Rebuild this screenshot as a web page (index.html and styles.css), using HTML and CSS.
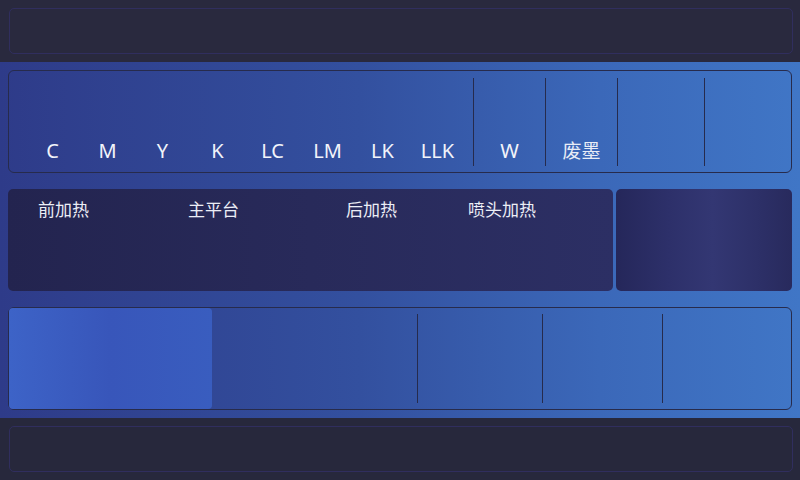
FILE: index.html
```html
<!DOCTYPE html>
<html lang="zh">
<head>
<meta charset="utf-8">
<title>Printer panel</title>
<link rel="stylesheet" href="styles.css">
</head>
<body>
<div class="page">
  <header class="bar bar-top"><div class="bar-box"></div></header>
  <main class="main">
    <section class="ink-box">
      <div class="ink-group">
        <div class="ink-cell">C</div>
        <div class="ink-cell">M</div>
        <div class="ink-cell">Y</div>
        <div class="ink-cell">K</div>
        <div class="ink-cell">LC</div>
        <div class="ink-cell">LM</div>
        <div class="ink-cell">LK</div>
        <div class="ink-cell">LLK</div>
      </div>
      <div class="vdiv"></div>
      <div class="ink-cell ink-mid">W</div>
      <div class="vdiv"></div>
      <div class="ink-cell ink-mid cjk">废墨</div>
      <div class="vdiv"></div>
      <div class="ink-cell ink-wide"></div>
      <div class="vdiv"></div>
      <div class="ink-cell ink-rest"></div>
    </section>
    <section class="mid-row">
      <div class="heat-panel">
        <div class="heat-label">前加热</div>
        <div class="heat-label">主平台</div>
        <div class="heat-label">后加热</div>
        <div class="heat-label">喷头加热</div>
      </div>
      <div class="side-panel"></div>
    </section>
    <section class="bottom-box">
      <div class="hl-block"></div>
      <div class="seg seg-a"></div>
      <div class="vdiv"></div>
      <div class="seg seg-b"></div>
      <div class="vdiv"></div>
      <div class="seg seg-c"></div>
      <div class="vdiv"></div>
      <div class="seg seg-rest"></div>
    </section>
  </main>
  <footer class="bar bar-bottom"><div class="bar-box"></div></footer>
</div>
</body>
</html>
```
FILE: styles.css
```css
* { box-sizing: border-box; }
html, body { margin: 0; padding: 0; }
body {
  width: 800px;
  height: 480px;
  overflow: hidden;
  background: #29293e;
  font-family: "Noto Sans", "Noto Sans CJK SC", sans-serif;
  color: #f2f4fa;
}
.page {
  width: 800px;
  height: 480px;
  display: flex;
  flex-direction: column;
}
.bar {
  height: 62px;
  padding: 8px 7px 8px 9px;
  display: flex;
}
.bar-top { background: #29293e; }
.bar-bottom { background: #27283c; }
.bar-box {
  flex: 1;
  border: 1px solid #302e5e;
  border-radius: 5px;
}
.main {
  height: 356px;
  padding: 8px 8px 8px 8px;
  background: linear-gradient(90deg, #2e3b89 0%, #33509f 45%, #3b68b9 75%, #4076c6 100%);
  display: flex;
  flex-direction: column;
}
.ink-box {
  width: 784px;
  height: 103px;
  border: 1px solid #272b4c;
  border-radius: 6px;
  padding: 7px 0 6px 0;
  display: flex;
}
.ink-group {
  display: flex;
  padding-left: 16px;
  margin-right: 8px;
}
.ink-cell {
  width: 55px;
  display: flex;
  align-items: flex-end;
  justify-content: center;
  font-size: 20px;
  line-height: 24px;
  padding-bottom: 3px;
}
.ink-mid { width: 71px; }
.ink-wide { width: 86px; }
.ink-rest { flex: 1; }
.cjk { font-size: 19px; color: #e8ecf6; }
.vdiv {
  width: 1px;
  background: #262b4d;
  flex: none;
}
.mid-row {
  margin-top: 16px;
  height: 102px;
  display: flex;
  gap: 3px;
}
.heat-panel {
  width: 605px;
  border-radius: 5px;
  background: linear-gradient(90deg, #23244f 0%, #282a5a 50%, #2c2f64 100%);
  display: grid;
  grid-template-columns: 150px 158px 122px auto;
  align-content: start;
  padding: 9px 0 0 30px;
}
.heat-label {
  font-size: 17px;
  line-height: 24px;
  color: #eceef6;
}
.side-panel {
  flex: 1;
  border-radius: 5px;
  background: linear-gradient(90deg, #25275a 0%, #2d306a 30%, #333773 55%, #2d3068 80%, #282a5d 100%);
}
.bottom-box {
  margin-top: 16px;
  width: 784px;
  height: 103px;
  border: 1px solid #272b4c;
  border-radius: 6px;
  display: flex;
}
.bottom-box .vdiv { margin: 6px 0 6px 0; }
.hl-block {
  width: 203px;
  border-radius: 4px;
  background: linear-gradient(90deg, #3d63c7 0%, #3856ba 50%, #395dbf 100%);
}
.seg-a { width: 205px; }
.seg-b { width: 124px; }
.seg-c { width: 119px; }
.seg-rest { flex: 1; }
```
